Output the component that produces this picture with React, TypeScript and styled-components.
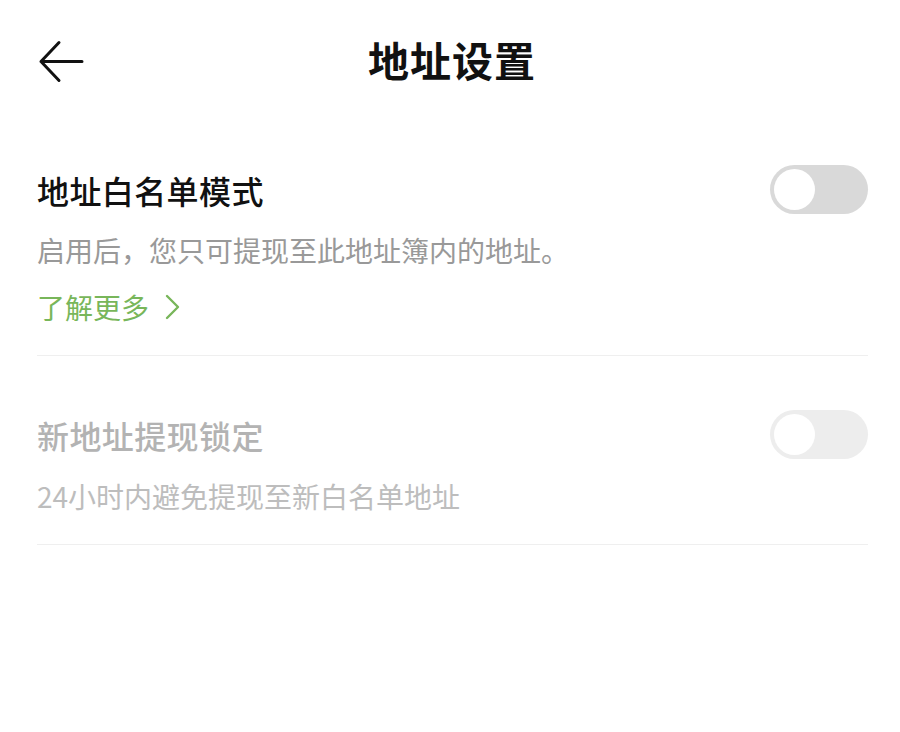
import React, { useState } from "react";
import styled, { createGlobalStyle } from "styled-components";

const GlobalStyle = createGlobalStyle`
  html, body {
    margin: 0;
    padding: 0;
    background: #ffffff;
    font-family: "Noto Sans CJK SC", "Noto Sans", sans-serif;
  }
`;

const Page = styled.div`
  width: 900px;
  min-height: 732px;
  background: #fff;
`;

const Header = styled.header`
  position: relative;
  height: 124px;
  box-sizing: border-box;
  padding-bottom: 6px;
  display: flex;
  align-items: center;
  justify-content: center;
`;

const BackButton = styled.button`
  position: absolute;
  left: 38px;
  top: 40px;
  width: 46px;
  height: 44px;
  padding: 0;
  border: none;
  background: none;
  cursor: pointer;
`;

const Title = styled.h1`
  margin: 0 0 0 4px;
  font-size: 41px;
  font-weight: 600;
  color: #111;
  letter-spacing: 1px;
`;

const Section = styled.section<{ $top: number }>`
  margin: 0 32px 0 37px;
  padding: ${(p) => p.$top}px 0 30px;
  border-bottom: 1px solid #efefef;
`;

const Row = styled.div`
  display: flex;
  align-items: center;
  justify-content: space-between;
  height: 49px;
`;

const ItemTitle = styled.div<{ $disabled?: boolean }>`
  font-size: 32px;
  line-height: 40px;
  font-weight: 500;
  letter-spacing: 0.4px;
  color: ${(p) => (p.$disabled ? "#b3b3b3" : "#111")};
`;

const Desc = styled.p<{ $disabled?: boolean; $gap: number }>`
  margin: ${(p) => p.$gap}px 0 0;
  font-size: 28px;
  line-height: 36px;
  color: ${(p) => (p.$disabled ? "#bdbdbd" : "#999")};
`;

const MoreLink = styled.a`
  display: flex;
  align-items: center;
  gap: 16px;
  margin-top: 21px;
  font-size: 28px;
  line-height: 36px;
  color: #78b65a;
  text-decoration: none;
  cursor: pointer;
`;

const Track = styled.button<{ $on: boolean; $disabled?: boolean }>`
  position: relative;
  width: 98px;
  height: 49px;
  padding: 0;
  border: none;
  border-radius: 25px;
  background: ${(p) =>
    p.$on ? "#78b65a" : p.$disabled ? "#ededed" : "#d9d9d9"};
  cursor: ${(p) => (p.$disabled ? "default" : "pointer")};
`;

const Knob = styled.span<{ $on: boolean }>`
  position: absolute;
  top: 4px;
  left: ${(p) => (p.$on ? "53px" : "4px")};
  width: 41px;
  height: 41px;
  border-radius: 50%;
  background: #fff;
  transition: left 0.2s;
`;

function Toggle({ disabled }: { disabled?: boolean }) {
  const [on, setOn] = useState(false);
  return (
    <Track
      $on={on}
      $disabled={disabled}
      onClick={() => !disabled && setOn(!on)}
    >
      <Knob $on={on} />
    </Track>
  );
}

export default function App() {
  return (
    <Page>
      <GlobalStyle />
      <Header>
        <BackButton aria-label="back">
          <svg width="46" height="44" viewBox="0 0 46 44" fill="none">
            <path
              d="M44 21.5H3M21 2.5L3 21.5L21 40.5"
              stroke="#111"
              strokeWidth="3"
              strokeLinecap="round"
              strokeLinejoin="round"
            />
          </svg>
        </BackButton>
        <Title>地址设置</Title>
      </Header>

      <Section $top={41}>
        <Row>
          <ItemTitle>地址白名单模式</ItemTitle>
          <Toggle />
        </Row>
        <Desc $gap={18}>启用后，您只可提现至此地址簿内的地址。</Desc>
        <MoreLink>
          了解更多
          <svg width="16" height="26" viewBox="0 0 16 26" fill="none">
            <path
              d="M2 2L13 13L2 24"
              stroke="#78b65a"
              strokeWidth="2.4"
              strokeLinecap="round"
              strokeLinejoin="round"
            />
          </svg>
        </MoreLink>
      </Section>

      <Section $top={54}>
        <Row>
          <ItemTitle $disabled>新地址提现锁定</ItemTitle>
          <Toggle disabled />
        </Row>
        <Desc $disabled $gap={19}>
          24小时内避免提现至新白名单地址
        </Desc>
      </Section>
    </Page>
  );
}
